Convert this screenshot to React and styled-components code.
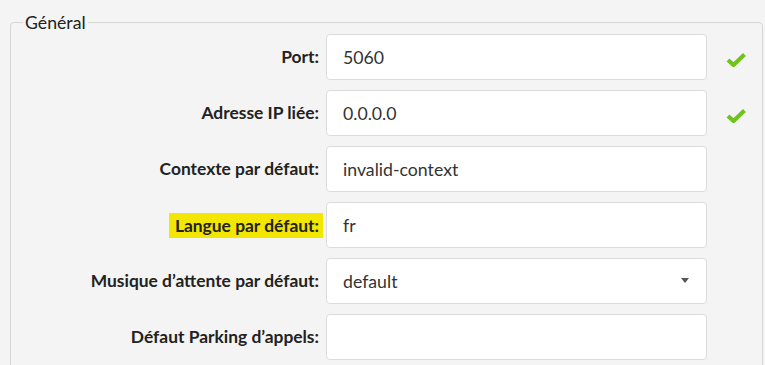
import React from "react";
import styled, { createGlobalStyle } from "styled-components";

const Global = createGlobalStyle`
  html, body { margin: 0; padding: 0; background: #f4f4f4; }
  body { font-family: Lato, "Noto Sans", sans-serif; color: #222; }
`;

const Fieldset = styled.fieldset`
  box-sizing: border-box;
  width: 753px;
  margin: 12px 0 0 10px;
  padding: 1px 0 12px 0;
  border: 1px solid #d6d6d6;
  border-radius: 4px;
`;

const Legend = styled.legend`
  margin-left: 12px;
  padding: 0 2px;
  font-size: 17.7px;
  line-height: 21px;
  color: #222;
`;

const Grid = styled.div`
  display: grid;
  grid-template-columns: 308px 388px 39px;
  row-gap: 10px;
  align-items: center;
`;

const Label = styled.label`
  justify-self: end;
  font-weight: 700;
  font-size: 17.4px;
  line-height: 20px;
  color: #222;
  white-space: nowrap;
  ${(p) =>
    p.$highlight &&
    `
    background: #f3e600;
    padding: 3px 4px 2px 6px;
    margin-right: -4px;
  `}
`;

const Field = styled.div`
  position: relative;
  box-sizing: border-box;
  margin-left: 7px;
  width: 381px;
  height: 46px;
  background: #fff;
  border: 1px solid #dcdcdc;
  border-radius: 4px;
  display: flex;
  align-items: center;
  padding-left: 16px;
  font-size: 17.7px;
  color: #333;
`;

const Caret = styled.span`
  position: absolute;
  right: 17px;
  top: 50%;
  margin-top: -3px;
  width: 0;
  height: 0;
  border-left: 4px solid transparent;
  border-right: 4px solid transparent;
  border-top: 5px solid #555;
`;

const CheckCell = styled.div`
  margin-left: 19px;
  width: 20px;
  height: 16px;
  margin-top: 5px;
  display: flex;
`;

const Check = () => (
  <svg width="20" height="16" viewBox="0 0 20 16">
    <path d="M2 8 L7.5 13 L18.5 2.5" fill="none" stroke="#72c21d" strokeWidth="4.2" strokeLinejoin="round" />
  </svg>
);

const rows = [
  { label: "Port:", value: "5060", check: true },
  { label: "Adresse IP liée:", value: "0.0.0.0", check: true },
  { label: "Contexte par défaut:", value: "invalid-context" },
  { label: "Langue par défaut:", value: "fr", highlight: true },
  { label: "Musique d’attente par défaut:", value: "default", select: true },
  { label: "Défaut Parking d’appels:", value: "" },
];

export default function App() {
  return (
    <>
      <Global />
      <Fieldset>
        <Legend>Général</Legend>
        <Grid>
          {rows.map((r) => (
            <React.Fragment key={r.label}>
              <Label $highlight={r.highlight}>{r.label}</Label>
              <Field>
                {r.value}
                {r.select && <Caret />}
              </Field>
              <CheckCell>{r.check && <Check />}</CheckCell>
            </React.Fragment>
          ))}
        </Grid>
      </Fieldset>
    </>
  );
}
